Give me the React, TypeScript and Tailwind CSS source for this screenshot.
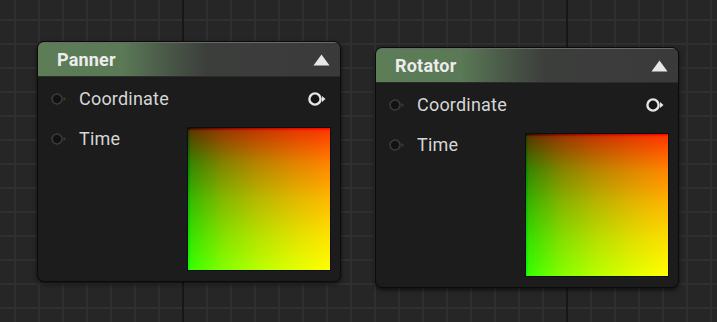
import React from "react";

function InPin() {
  return (
    <svg width="18" height="14" viewBox="0 0 18 14" className="shrink-0">
      <circle cx="7" cy="7" r="5" fill="#121212" stroke="#3b3b3b" strokeWidth="1.6" />
      <path d="M13.5 4.8 L16 7 L13.5 9.2 Z" fill="#3b3b3b" />
    </svg>
  );
}

function OutPin() {
  return (
    <svg width="22" height="16" viewBox="0 0 22 16" className="shrink-0">
      <circle cx="8" cy="8" r="5.6" fill="#151515" stroke="#e6e6e6" strokeWidth="2.4" />
      <path d="M15 5 L18.5 8 L15 11 Z" fill="#e6e6e6" />
    </svg>
  );
}

function Node({ title, left, top }: { title: string; left: number; top: number }) {
  return (
    <div
      className="absolute w-[304px] h-[241px] rounded-[7px] bg-[#1b1c1b] border border-[#0b0b0b] shadow-[0_2px_4px_rgba(0,0,0,0.6)] overflow-hidden flex flex-col"
      style={{ left, top }}
    >
      <div className="h-[35px] shrink-0 flex items-center justify-between pl-[19px] pr-[10px] bg-[linear-gradient(to_right,#5d7d57_0%,#5a7956_28%,#4a5a48_42%,#3c3e3c_56%,#3a3a3a_100%)] border-t border-[#6a6a6a] shadow-[inset_0_-1px_0_#2a2a2a]">
        <span className="text-[18px] font-bold text-[#ececec] leading-none tracking-[0.2px] [font-family:Roboto,'Noto_Sans',sans-serif]">
          {title}
        </span>
        <svg width="17" height="12" viewBox="0 0 17 12">
          <path d="M8.5 0.5 L16.5 11.5 L0.5 11.5 Z" fill="#e8e8e8" />
        </svg>
      </div>
      <div className="flex flex-col pt-[12px] pl-[12px] pr-[9px] [font-family:Roboto,'Noto_Sans',sans-serif] text-[18px] tracking-[0.2px] text-[#d6d6d6]">
        <div className="h-[20px] flex items-center justify-between">
          <div className="flex items-center gap-[11px]">
            <InPin />
            <span className="leading-none">Coordinate</span>
          </div>
          <div className="mr-[2px]">
            <OutPin />
          </div>
        </div>
        <div className="mt-[18px] flex items-start justify-between">
          <div className="mt-[2px] h-[20px] flex items-center gap-[11px]">
            <InPin />
            <span className="leading-none">Time</span>
          </div>
          <div className="w-[144px] h-[144px] border border-[#0e0e0e] bg-[linear-gradient(to_right,#000000_0%,#3a0000_2%,#840000_25%,#b80000_50%,#e00000_75%,#ff0000_100%),linear-gradient(to_bottom,#000000_0%,#2a3a00_2%,#008400_25%,#00b800_50%,#00e000_75%,#00ff00_100%)] bg-blend-screen" />
        </div>
      </div>
    </div>
  );
}

export default function App() {
  return (
    <div className="relative w-[717px] h-[322px] overflow-hidden bg-[#262626] bg-[linear-gradient(to_right,#171717_2px,transparent_2px),linear-gradient(to_right,#2f2f2f_2px,transparent_2px),linear-gradient(to_bottom,#2f2f2f_2px,transparent_2px)] bg-[length:384px_100%,24px_24px,24px_24px] bg-[position:182px_0,14px_0,0_19px]">
      <Node title="Panner" left={37} top={41} />
      <Node title="Rotator" left={375} top={47} />
    </div>
  );
}
